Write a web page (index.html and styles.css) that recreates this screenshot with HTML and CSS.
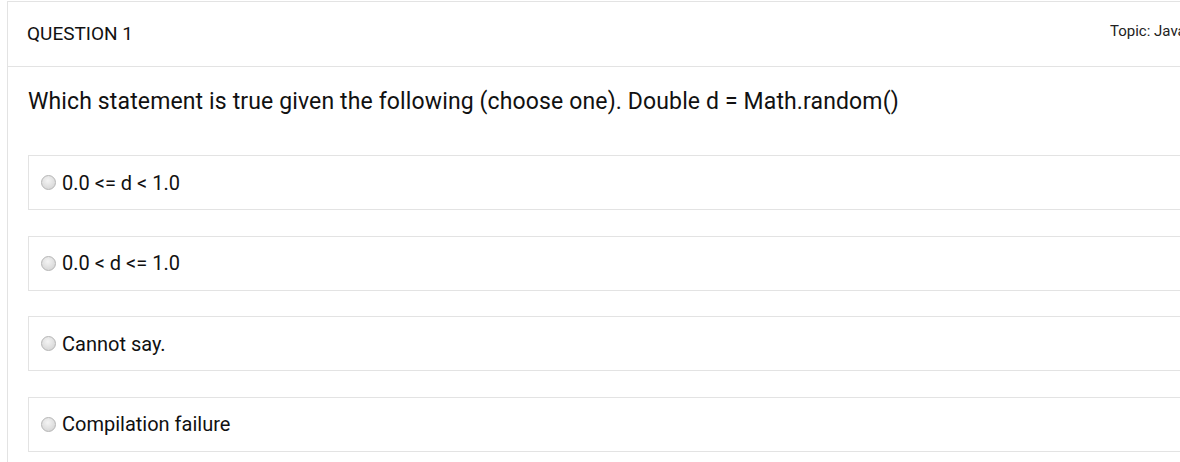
FILE: index.html
```html
<!DOCTYPE html>
<html>
<head>
<meta charset="utf-8">
<link rel="stylesheet" href="styles.css">
</head>
<body>
<div class="card">
  <div class="card-header">
    <div class="q-title">QUESTION 1</div>
    <div class="q-topic">Topic: Java</div>
  </div>
  <div class="card-body">
    <div class="q-text">Which statement is true given the following (choose one). Double d = Math.random()</div>
    <div class="options">
      <label class="option"><span class="radio"></span><span>0.0 &lt;= d &lt; 1.0</span></label>
      <label class="option"><span class="radio"></span><span>0.0 &lt; d &lt;= 1.0</span></label>
      <label class="option"><span class="radio"></span><span>Cannot say.</span></label>
      <label class="option"><span class="radio"></span><span>Compilation failure</span></label>
    </div>
  </div>
</div>
</body>
</html>
```
FILE: styles.css
```css
html, body {
  margin: 0;
  padding: 0;
  background: #fff;
  overflow: hidden;
}
body {
  font-family: Roboto, "Liberation Sans", sans-serif;
  color: #212121;
  width: 1180px;
  height: 462px;
}
.card {
  margin: 1px 0 0 7px;
  width: 1196px;
  border: 1px solid #e3e3e3;
  border-right: none;
  box-sizing: border-box;
}
.card-header {
  height: 65px;
  border-bottom: 1px solid #e3e3e3;
  display: flex;
  justify-content: space-between;
  padding: 0 0 0 19px;
  box-sizing: border-box;
}
.q-title {
  font-size: 19px;
  line-height: 19px;
  padding-top: 22px;
  color: #111;
}
.q-topic {
  font-size: 15px;
  line-height: 15px;
  padding-top: 22px;
  width: 93px;
  white-space: nowrap;
  color: #222;
}
.card-body {
  padding: 21px 0 40px 20px;
}
.q-text {
  font-size: 23px;
  letter-spacing: 0.13px;
  line-height: 28px;
  color: #111;
  margin-bottom: 39px;
}
.options {
  display: flex;
  flex-direction: column;
  gap: 25.5px;
}
.option {
  display: flex;
  align-items: center;
  height: 55px;
  box-sizing: border-box;
  border: 1px solid #e3e3e3;
  border-right: none;
  padding-left: 12px;
  font-size: 20px;
  color: #111;
}
.radio {
  width: 15px;
  height: 15px;
  border-radius: 50%;
  box-sizing: border-box;
  border: 1px solid #b5b5b5;
  background: radial-gradient(circle at 45% 35%, #f4f4f4 0%, #dedede 60%, #cfcfcf 100%);
  margin-right: 6px;
  flex: none;
}
```
